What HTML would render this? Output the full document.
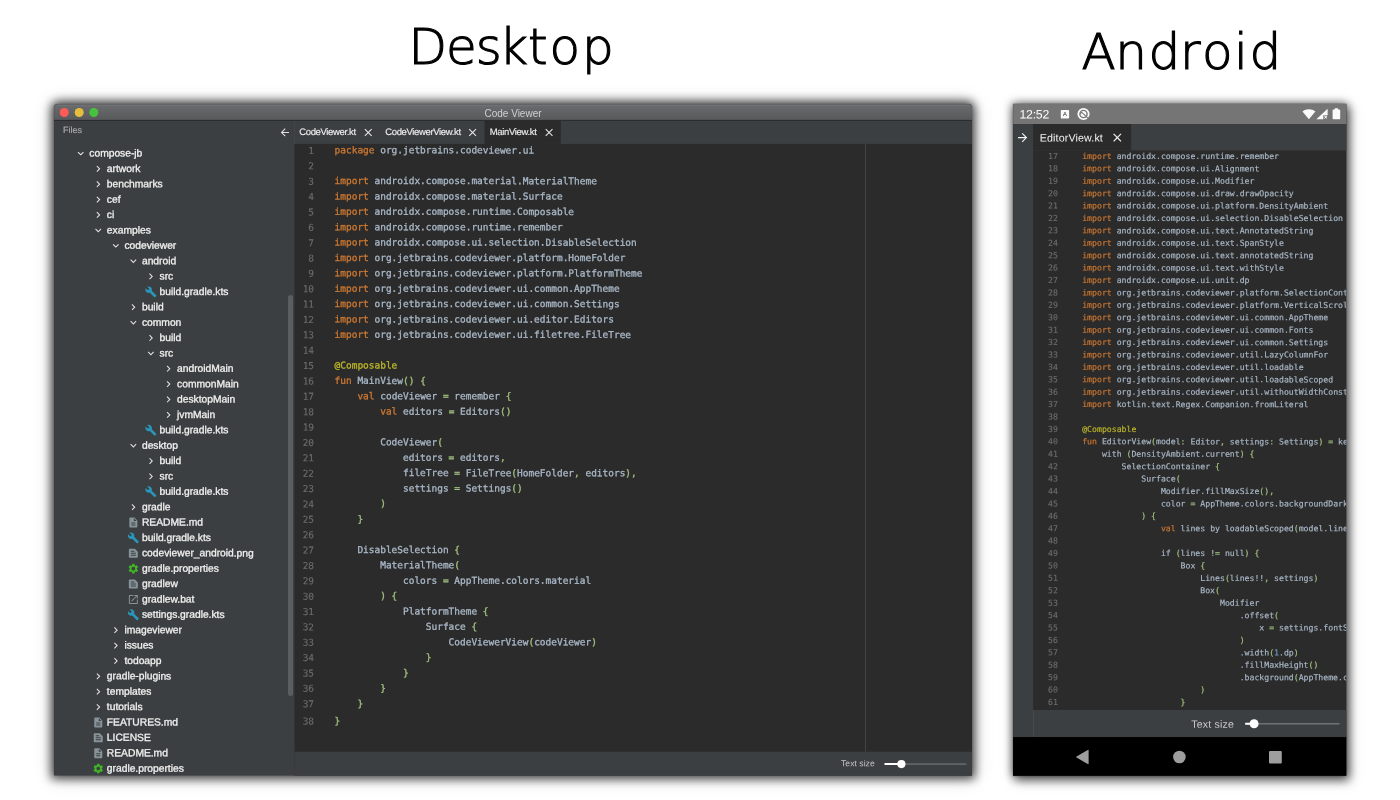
<!DOCTYPE html>
<html lang="en">
<head>
<meta charset="utf-8">
<title>Code Viewer - Desktop and Android</title>
<style>
html,body{margin:0;padding:0;background:#fff;}
html{width:1400px;height:800px;overflow:hidden;}
body{width:1400px;height:800px;position:relative;overflow:hidden;font-family:"Liberation Sans",sans-serif;}
div{position:absolute;white-space:nowrap;transform-origin:0 0;}
#titles{position:absolute;left:0;top:0;will-change:transform;}
#dshadow{left:54px;top:104px;width:918px;height:671px;border-radius:4px 4px 0 0;box-shadow:0 0.500px 10px 3px rgba(0,0,0,.68),0 1px 20px 1px rgba(0,0,0,.22),0 0 2px rgba(0,0,0,.3);background:#3c3f41;}
#ashadow{left:1013px;top:104px;width:333px;height:672px;box-shadow:0 0 9px 1px rgba(0,0,0,.5),3px 4px 10px 1px rgba(0,0,0,.5),0 0 2px rgba(0,0,0,.3);background:#2b2b2b;}
#ui{left:0;top:0;width:1400px;height:800px;overflow:hidden;filter:blur(0.4px);will-change:transform;}
#ui svg{position:absolute;left:0;top:0;}
#aclip{left:0;top:0;width:1347px;height:800px;overflow:hidden;clip-path:inset(0 0.700px 0 0);}
.ttl{height:17px;line-height:20.4px;text-align:center;font-size:10px;color:#cfd0d1;}
.fl{font-size:9px;line-height:14px;color:#abadae;-webkit-text-stroke:0.15px;}
.tab{font-size:9.5px;line-height:24px;height:24px;color:#ececec;letter-spacing:-0.35px;-webkit-text-stroke:0.15px;}
.ts{font-size:8.7px;line-height:14px;color:#c4c5c6;}
.ti{font-size:10.3px;line-height:15px;height:15px;color:#f0f0f0;letter-spacing:-0.02px;-webkit-text-stroke:0.3px #f0f0f0;}
.ln,.cl,.aln,.acl{font-family:"DejaVu Sans Mono","Liberation Mono",monospace;white-space:pre;-webkit-text-stroke:0.3px;}
.ln,.aln{-webkit-text-stroke:0.12px;color:#6c6c6c;text-align:right;}
.ln{font-size:9.5px;line-height:15px;height:15px;width:20px;}
.cl{font-size:9.48px;line-height:15px;height:15px;color:#a9b7c6;}
.aln{font-size:8.2px;line-height:12px;height:12px;width:17.3px;}
.acl{font-size:8.185px;line-height:12px;height:12px;color:#a9b7c6;-webkit-text-stroke:0.18px;}
.k{color:#cc7832}.p{color:#a1c17e}.v{color:#6897bb}.a{color:#bbb529}
.clk{font-size:12.3px;line-height:14px;color:#fafafa;letter-spacing:-0.25px;}
.abox{width:8.3px;height:8.6px;font-size:6px;line-height:8.4px;text-align:center;color:#6a6a6a;font-weight:bold;}
.atab{font-size:10.7px;line-height:14px;color:#f2f2f2;letter-spacing:0.12px;}
.ats{font-size:10.6px;line-height:14px;color:#c8c9ca;letter-spacing:0.2px;}
</style>
</head>
<body>
<svg id="titles" width="1400" height="100" viewBox="0 0 1400 100" font-family="DejaVu Sans, Liberation Sans, sans-serif" font-weight="200" font-size="50" fill="#000" stroke="#000" stroke-width="1.1">
<text x="408.400 445.900 475.800 499 528 549.400 582" y="64.300">Desktop</text>
<text x="1081.400 1115.300 1148.600 1180 1202 1233.900 1249.500" y="69">Android</text>
</svg>
<div id="dshadow"></div>
<div id="ashadow"></div>
<div id="ui">
<svg width="1400" height="800" viewBox="0 0 1400 800">
<defs><linearGradient id="tg" x1="0" y1="0" x2="0" y2="1"><stop offset="0" stop-color="#6a6c6e"/><stop offset="1" stop-color="#58595b"/></linearGradient></defs>
<path d="M54.2 775.4V107.7a3.500 3.500 0 0 1 3.500 -3.500H968.5a3.500 3.500 0 0 1 3.500 3.500V775.4z" fill="#3c3f41"/>
<path d="M54.2 120V107.7a3.500 3.500 0 0 1 3.500 -3.500H968.5a3.500 3.500 0 0 1 3.500 3.500V120z" fill="url(#tg)"/>
<rect x="56.2" y="104.8" width="913.8" height="0.9" fill="#747678"/>
<rect x="54.2" y="119.9" width="917.8" height="1.1" fill="#2a2c2d"/>
<circle cx="64.25" cy="112.5" r="4.5" fill="#fc5b57"/>
<circle cx="79.2" cy="112.5" r="4.5" fill="#e5bf3c"/>
<circle cx="93.8" cy="112.5" r="4.5" fill="#48c23c"/>
<rect x="294.5" y="121" width="677.5" height="654.4" fill="#2b2b2b"/>
<rect x="294.5" y="121" width="677.5" height="22.9" fill="#3c3f41"/>
<rect x="294" y="121" width="1" height="22.9" fill="#424547"/>
<rect x="484.5" y="121" width="76.3" height="22.9" fill="#2b2b2b"/>
<rect x="865" y="143.9" width="1" height="607.6" fill="#404446"/>
<rect x="294.5" y="751.75" width="677.5" height="23.65" fill="#3c3f41"/>
<rect x="288" y="295" width="5" height="401" rx="2.5" fill="#5b5e60"/>
<rect x="884.3" y="763.5" width="82" height="1.1" fill="#787b7d"/>
<rect x="884.3" y="763.1" width="17" height="2" rx="1" fill="#ffffff"/>
<circle cx="901.4" cy="764.1" r="4.1" fill="#ffffff"/>
<g transform="translate(278.75 126.25) scale(0.5125)" fill="#e0e0e0" fill-rule="evenodd"><path d="M20 11H7.830l5.590-5.590L12 4l-8 8 8 8 1.410-1.410L7.830 13H20v-2z"/></g>
<g transform="translate(361.8 126.05) scale(0.5375)" fill="#e6e6e6" fill-rule="evenodd"><path d="M19 6.410L17.590 5 12 10.590 6.410 5 5 6.410 10.590 12 5 17.590 6.410 19 12 13.410 17.590 19 19 17.590 13.410 12z"/></g>
<g transform="translate(466.15 126.05) scale(0.5375)" fill="#e6e6e6" fill-rule="evenodd"><path d="M19 6.410L17.590 5 12 10.590 6.410 5 5 6.410 10.590 12 5 17.590 6.410 19 12 13.410 17.590 19 19 17.590 13.410 12z"/></g>
<g transform="translate(542.65 126.05) scale(0.5375)" fill="#e6e6e6" fill-rule="evenodd"><path d="M19 6.410L17.590 5 12 10.590 6.410 5 5 6.410 10.590 12 5 17.590 6.410 19 12 13.410 17.590 19 19 17.590 13.410 12z"/></g>
<g transform="translate(74.45 147.2) scale(0.5208)" fill="#e4e4e4" fill-rule="evenodd"><path d="M7.41 8.59L12 13.17l4.59-4.58L18 10l-6 6-6-6 1.41-1.41z"/></g>
<g transform="translate(92 162.58) scale(0.5208)" fill="#e4e4e4" fill-rule="evenodd"><path d="M8.59 16.59L13.17 12 8.59 7.41 10 6l6 6-6 6-1.41-1.41z"/></g>
<g transform="translate(92 177.96) scale(0.5208)" fill="#e4e4e4" fill-rule="evenodd"><path d="M8.59 16.59L13.17 12 8.59 7.41 10 6l6 6-6 6-1.41-1.41z"/></g>
<g transform="translate(92 193.33) scale(0.5208)" fill="#e4e4e4" fill-rule="evenodd"><path d="M8.59 16.59L13.17 12 8.59 7.41 10 6l6 6-6 6-1.41-1.41z"/></g>
<g transform="translate(92 208.71) scale(0.5208)" fill="#e4e4e4" fill-rule="evenodd"><path d="M8.59 16.59L13.17 12 8.59 7.41 10 6l6 6-6 6-1.41-1.41z"/></g>
<g transform="translate(92 224.09) scale(0.5208)" fill="#e4e4e4" fill-rule="evenodd"><path d="M7.41 8.59L12 13.17l4.59-4.58L18 10l-6 6-6-6 1.41-1.41z"/></g>
<g transform="translate(109.55 239.47) scale(0.5208)" fill="#e4e4e4" fill-rule="evenodd"><path d="M7.41 8.59L12 13.17l4.59-4.58L18 10l-6 6-6-6 1.41-1.41z"/></g>
<g transform="translate(127.1 254.85) scale(0.5208)" fill="#e4e4e4" fill-rule="evenodd"><path d="M7.41 8.59L12 13.17l4.59-4.58L18 10l-6 6-6-6 1.41-1.41z"/></g>
<g transform="translate(144.65 270.22) scale(0.5208)" fill="#e4e4e4" fill-rule="evenodd"><path d="M8.59 16.59L13.17 12 8.59 7.41 10 6l6 6-6 6-1.41-1.41z"/></g>
<g transform="translate(144.9 285.85) scale(0.5000)" fill="#2a97ba" fill-rule="evenodd"><path d="M22.7 19l-9.1-9.1c.9-2.3.4-5-1.5-6.9-2-2-5-2.4-7.4-1.3L9 6 6 9 1.6 4.700C.4 7.100.9 10.100 2.900 12.100c1.900 1.900 4.600 2.400 6.900 1.500l9.100 9.100c.4.400 1 .400 1.400 0l2.300-2.300c.5-.4.5-1.100.1-1.400z"/></g>
<g transform="translate(127.1 300.98) scale(0.5208)" fill="#e4e4e4" fill-rule="evenodd"><path d="M8.59 16.59L13.17 12 8.59 7.41 10 6l6 6-6 6-1.41-1.41z"/></g>
<g transform="translate(127.1 316.36) scale(0.5208)" fill="#e4e4e4" fill-rule="evenodd"><path d="M7.41 8.59L12 13.17l4.59-4.58L18 10l-6 6-6-6 1.41-1.41z"/></g>
<g transform="translate(144.65 331.74) scale(0.5208)" fill="#e4e4e4" fill-rule="evenodd"><path d="M8.59 16.59L13.17 12 8.59 7.41 10 6l6 6-6 6-1.41-1.41z"/></g>
<g transform="translate(144.65 347.11) scale(0.5208)" fill="#e4e4e4" fill-rule="evenodd"><path d="M7.41 8.59L12 13.17l4.59-4.58L18 10l-6 6-6-6 1.41-1.41z"/></g>
<g transform="translate(162.2 362.49) scale(0.5208)" fill="#e4e4e4" fill-rule="evenodd"><path d="M8.59 16.59L13.17 12 8.59 7.41 10 6l6 6-6 6-1.41-1.41z"/></g>
<g transform="translate(162.2 377.87) scale(0.5208)" fill="#e4e4e4" fill-rule="evenodd"><path d="M8.59 16.59L13.17 12 8.59 7.41 10 6l6 6-6 6-1.41-1.41z"/></g>
<g transform="translate(162.2 393.25) scale(0.5208)" fill="#e4e4e4" fill-rule="evenodd"><path d="M8.59 16.59L13.17 12 8.59 7.41 10 6l6 6-6 6-1.41-1.41z"/></g>
<g transform="translate(162.2 408.63) scale(0.5208)" fill="#e4e4e4" fill-rule="evenodd"><path d="M8.59 16.59L13.17 12 8.59 7.41 10 6l6 6-6 6-1.41-1.41z"/></g>
<g transform="translate(144.9 424.25) scale(0.5000)" fill="#2a97ba" fill-rule="evenodd"><path d="M22.7 19l-9.1-9.1c.9-2.3.4-5-1.5-6.9-2-2-5-2.4-7.4-1.3L9 6 6 9 1.6 4.700C.4 7.100.9 10.100 2.900 12.100c1.900 1.900 4.600 2.400 6.900 1.500l9.100 9.100c.4.400 1 .400 1.400 0l2.300-2.300c.5-.4.5-1.100.1-1.400z"/></g>
<g transform="translate(127.1 439.38) scale(0.5208)" fill="#e4e4e4" fill-rule="evenodd"><path d="M7.41 8.59L12 13.17l4.59-4.58L18 10l-6 6-6-6 1.41-1.41z"/></g>
<g transform="translate(144.65 454.76) scale(0.5208)" fill="#e4e4e4" fill-rule="evenodd"><path d="M8.59 16.59L13.17 12 8.59 7.41 10 6l6 6-6 6-1.41-1.41z"/></g>
<g transform="translate(144.65 470.14) scale(0.5208)" fill="#e4e4e4" fill-rule="evenodd"><path d="M8.59 16.59L13.17 12 8.59 7.41 10 6l6 6-6 6-1.41-1.41z"/></g>
<g transform="translate(144.9 485.77) scale(0.5000)" fill="#2a97ba" fill-rule="evenodd"><path d="M22.7 19l-9.1-9.1c.9-2.3.4-5-1.5-6.9-2-2-5-2.4-7.4-1.3L9 6 6 9 1.6 4.700C.4 7.100.9 10.100 2.900 12.100c1.900 1.900 4.600 2.400 6.900 1.500l9.100 9.100c.4.400 1 .400 1.400 0l2.300-2.300c.5-.4.5-1.100.1-1.400z"/></g>
<g transform="translate(127.1 500.89) scale(0.5208)" fill="#e4e4e4" fill-rule="evenodd"><path d="M8.59 16.59L13.17 12 8.59 7.41 10 6l6 6-6 6-1.41-1.41z"/></g>
<g transform="translate(127.35 516.52) scale(0.5000)" fill="#87939a" fill-rule="evenodd"><path d="M14 2H6c-1.1 0-1.99.9-1.99 2L4 20c0 1.1.89 2 1.99 2H18c1.1 0 2-.9 2-2V8l-6-6zm2 16H8v-2h8v2zm0-4H8v-2h8v2zm-3-5V3.5L18.5 9H13z"/></g>
<g transform="translate(127.35 531.9) scale(0.5000)" fill="#2a97ba" fill-rule="evenodd"><path d="M22.7 19l-9.1-9.1c.9-2.3.4-5-1.5-6.9-2-2-5-2.4-7.4-1.3L9 6 6 9 1.6 4.700C.4 7.100.9 10.100 2.900 12.100c1.900 1.900 4.600 2.400 6.900 1.500l9.100 9.100c.4.400 1 .400 1.400 0l2.300-2.300c.5-.4.5-1.100.1-1.400z"/></g>
<g transform="translate(127.35 547.28) scale(0.5000)" fill="#87939a" fill-rule="evenodd"><path d="M20.41 8.41l-4.83-4.83c-.37-.37-.88-.58-1.41-.58H5c-1.1 0-2 .9-2 2v14c0 1.1.9 2 2 2h14c1.1 0 2-.9 2-2V9.83c0-.53-.21-1.04-.59-1.42zM7 7h7v2H7V7zm10 10H7v-2h10v2zm0-4H7v-2h10v2z"/></g>
<g transform="translate(127.35 562.66) scale(0.5000)" fill="#40b525" fill-rule="evenodd"><path d="M19.14 12.94c.04-.3.06-.61.06-.94 0-.32-.02-.64-.07-.94l2.030-1.580c.18-.14.23-.41.12-.61l-1.920-3.320c-.12-.22-.37-.29-.59-.22l-2.390.96c-.5-.38-1.030-.7-1.620-.94l-.36-2.540c-.04-.24-.24-.41-.48-.41h-3.840c-.24 0-.43.17-.47.41l-.36 2.540c-.59.24-1.130.57-1.620.94l-2.390-.96c-.22-.08-.47 0-.59.22L2.740 8.870c-.12.21-.08.47.12.61l2.030 1.580c-.05.3-.09.63-.09.94s.02.64.07.94l-2.030 1.580c-.18.14-.23.41-.12.61l1.920 3.320c.12.22.37.29.59.22l2.390-.96c.5.38 1.030.7 1.620.94l.36 2.540c.05.24.24.41.48.41h3.840c.24 0 .44-.17.47-.41l.36-2.540c.59-.24 1.130-.56 1.620-.94l2.390.96c.22.08.47 0 .59-.22l1.920-3.320c.12-.22.07-.47-.12-.61l-2.010-1.580zM12 15.600c-1.980 0-3.600-1.620-3.600-3.600s1.620-3.600 3.600-3.600 3.600 1.620 3.600 3.600-1.620 3.600-3.600 3.600z"/></g>
<g transform="translate(127.35 578.03) scale(0.5000)" fill="#87939a" fill-rule="evenodd"><path d="M20.41 8.41l-4.83-4.83c-.37-.37-.88-.58-1.41-.58H5c-1.1 0-2 .9-2 2v14c0 1.1.9 2 2 2h14c1.1 0 2-.9 2-2V9.83c0-.53-.21-1.04-.59-1.42zM7 7h7v2H7V7zm10 10H7v-2h10v2zm0-4H7v-2h10v2z"/></g>
<g transform="translate(127.35 593.41) scale(0.5000)" fill="#87939a" fill-rule="evenodd"><path d="M19 19H5V5h7V3H5c-1.110 0-2 .9-2 2v14c0 1.100.89 2 2 2h14c1.100 0 2-.9 2-2v-7h-2v7zM14 3v2h3.590l-9.830 9.830 1.410 1.410L19 6.410V10h2V3h-7z"/></g>
<g transform="translate(127.35 608.79) scale(0.5000)" fill="#2a97ba" fill-rule="evenodd"><path d="M22.7 19l-9.1-9.1c.9-2.3.4-5-1.5-6.9-2-2-5-2.4-7.4-1.3L9 6 6 9 1.6 4.700C.4 7.100.9 10.100 2.900 12.100c1.900 1.900 4.600 2.400 6.900 1.500l9.100 9.100c.4.400 1 .400 1.400 0l2.300-2.300c.5-.4.5-1.100.1-1.400z"/></g>
<g transform="translate(109.55 623.92) scale(0.5208)" fill="#e4e4e4" fill-rule="evenodd"><path d="M8.59 16.59L13.17 12 8.59 7.41 10 6l6 6-6 6-1.41-1.41z"/></g>
<g transform="translate(109.55 639.3) scale(0.5208)" fill="#e4e4e4" fill-rule="evenodd"><path d="M8.59 16.59L13.17 12 8.59 7.41 10 6l6 6-6 6-1.41-1.41z"/></g>
<g transform="translate(109.55 654.67) scale(0.5208)" fill="#e4e4e4" fill-rule="evenodd"><path d="M8.59 16.59L13.17 12 8.59 7.41 10 6l6 6-6 6-1.41-1.41z"/></g>
<g transform="translate(92 670.05) scale(0.5208)" fill="#e4e4e4" fill-rule="evenodd"><path d="M8.59 16.59L13.17 12 8.59 7.41 10 6l6 6-6 6-1.41-1.41z"/></g>
<g transform="translate(92 685.43) scale(0.5208)" fill="#e4e4e4" fill-rule="evenodd"><path d="M8.59 16.59L13.17 12 8.59 7.41 10 6l6 6-6 6-1.41-1.41z"/></g>
<g transform="translate(92 700.81) scale(0.5208)" fill="#e4e4e4" fill-rule="evenodd"><path d="M8.59 16.59L13.17 12 8.59 7.41 10 6l6 6-6 6-1.41-1.41z"/></g>
<g transform="translate(92.25 716.44) scale(0.5000)" fill="#87939a" fill-rule="evenodd"><path d="M14 2H6c-1.1 0-1.99.9-1.99 2L4 20c0 1.1.89 2 1.99 2H18c1.1 0 2-.9 2-2V8l-6-6zm2 16H8v-2h8v2zm0-4H8v-2h8v2zm-3-5V3.5L18.5 9H13z"/></g>
<g transform="translate(92.25 731.81) scale(0.5000)" fill="#87939a" fill-rule="evenodd"><path d="M20.41 8.41l-4.83-4.83c-.37-.37-.88-.58-1.41-.58H5c-1.1 0-2 .9-2 2v14c0 1.1.9 2 2 2h14c1.1 0 2-.9 2-2V9.83c0-.53-.21-1.04-.59-1.42zM7 7h7v2H7V7zm10 10H7v-2h10v2zm0-4H7v-2h10v2z"/></g>
<g transform="translate(92.25 747.19) scale(0.5000)" fill="#87939a" fill-rule="evenodd"><path d="M14 2H6c-1.1 0-1.99.9-1.99 2L4 20c0 1.1.89 2 1.99 2H18c1.1 0 2-.9 2-2V8l-6-6zm2 16H8v-2h8v2zm0-4H8v-2h8v2zm-3-5V3.5L18.5 9H13z"/></g>
<g transform="translate(92.25 762.57) scale(0.5000)" fill="#40b525" fill-rule="evenodd"><path d="M19.14 12.94c.04-.3.06-.61.06-.94 0-.32-.02-.64-.07-.94l2.030-1.580c.18-.14.23-.41.12-.61l-1.920-3.320c-.12-.22-.37-.29-.59-.22l-2.390.96c-.5-.38-1.030-.7-1.620-.94l-.36-2.540c-.04-.24-.24-.41-.48-.41h-3.840c-.24 0-.43.17-.47.41l-.36 2.540c-.59.24-1.130.57-1.620.94l-2.390-.96c-.22-.08-.47 0-.59.22L2.740 8.870c-.12.21-.08.47.12.61l2.030 1.580c-.05.3-.09.63-.09.94s.02.64.07.94l-2.030 1.580c-.18.14-.23.41-.12.61l1.920 3.320c.12.22.37.29.59.22l2.390-.96c.5.38 1.030.7 1.620.94l.36 2.540c.05.24.24.41.48.41h3.840c.24 0 .44-.17.47-.41l.36-2.540c.59-.24 1.130-.56 1.620-.94l2.390.96c.22.08.47 0 .59-.22l1.920-3.320c.12-.22.07-.47-.12-.61l-2.010-1.580zM12 15.600c-1.980 0-3.600-1.620-3.600-3.600s1.620-3.600 3.600-3.600 3.600 1.620 3.600 3.600-1.620 3.600-3.600 3.600z"/></g>
<rect x="1013.1" y="103.9" width="333.2" height="671.8" fill="#2b2b2b"/>
<rect x="1013.1" y="103.9" width="333.2" height="20.2" fill="#757575"/>
<rect x="1013.1" y="124.1" width="20" height="613" fill="#3c3f41"/>
<rect x="1033.1" y="124.1" width="313.2" height="26.3" fill="#3c3f41"/>
<rect x="1033.1" y="124.1" width="98" height="26.3" fill="#2b2b2b"/>
<rect x="1033.1" y="710" width="313.2" height="27.2" fill="#3c3f41"/>
<rect x="1033.1" y="710" width="0.8" height="27.2" fill="#4a4e50"/>
<rect x="1013.1" y="737.1" width="333.2" height="38.6" fill="#000000"/>
<rect x="1060.8" y="109.9" width="8.3" height="8.6" rx="0.8" fill="#fafafa"/>
<g transform="translate(1083.500 114)"><circle r="5.200" fill="none" stroke="#fafafa" stroke-width="1.800"/><circle r="2.900" fill="#fafafa"/><path d="M-3.100 -0.500L-1.700 -1.600L5 4.600" fill="none" stroke="#757575" stroke-width="1.100"/></g>
<path transform="translate(1302.300 109.200) scale(0.5077 0.5)" fill="#fafafa" d="M13 20L0.300 4.500C4 1.600 8.300 0 13 0s9 1.600 12.700 4.500L13 20z"/>
<g transform="translate(1316.400 108.800) scale(0.5091 0.52)" fill="#fafafa"><path d="M22 0L0 20h13.500v-7.500H22V0z"/><path d="M15.200 14.200l1.100-1.100 1.900 1.900 1.900-1.900 1.100 1.100-1.900 1.900 1.900 1.900-1.100 1.100-1.900-1.900-1.900 1.900-1.100-1.100 1.900-1.900z"/></g>
<path transform="translate(1332.600 108.300) scale(0.5429 0.545)" fill="#fafafa" d="M4 0h6v2h2.500c.8 0 1.500.7 1.500 1.500v15c0 .8-.7 1.500-1.500 1.500h-11C.7 20 0 19.300 0 18.500v-15C0 2.700.7 2 1.500 2H4V0z"/>
<g transform="translate(1015.7 130.7) scale(0.5750)" fill="#f2f2f2" fill-rule="evenodd"><path d="M12 4l-1.410 1.410L16.170 11H4v2h12.170l-5.580 5.590L12 20l8-8z"/></g>
<g transform="translate(1110.25 130.55) scale(0.5875)" fill="#f2f2f2" fill-rule="evenodd"><path d="M19 6.410L17.590 5 12 10.590 6.410 5 5 6.410 10.590 12 5 17.590 6.410 19 12 13.410 17.590 19 19 17.590 13.410 12z"/></g>
<rect x="1245" y="723.2" width="94.5" height="1.2" fill="#7c7f82"/>
<rect x="1245" y="722.8" width="9" height="2" rx="1" fill="#ffffff"/>
<circle cx="1254.1" cy="723.8" r="4.5" fill="#ffffff"/>
<path transform="translate(1075.800 749.800) scale(0.9714 0.96)" fill="#9e9e9e" d="M13.200 0.600v13.800a.6.600 0 0 1-.9.500L0.800 8a.6.600 0 0 1 0-1L12.300.1a.6.600 0 0 1 .9.500z"/>
<circle cx="1179.4" cy="757" r="6.3" fill="#9e9e9e"/>
<rect x="1269" y="750.9" width="12.8" height="12.6" rx="1" fill="#9e9e9e"/>
</svg>
<div class="ttl" style="left:54px;top:104px;width:918px;">Code Viewer</div>
<div class="fl" style="left:63px;top:123px;transform:matrix(1,0.0005,0,1,0,0);">Files</div>
<div class="tab" style="left:299px;top:120px;transform:matrix(1,0.0005,0,1,0.2,0);">CodeViewer.kt</div>
<div class="tab" style="left:385px;top:120px;transform:matrix(1,0.0005,0,1,0.2,0);">CodeViewerView.kt</div>
<div class="tab" style="left:489px;top:120px;transform:matrix(1,0.0005,0,1,0.8,0);">MainView.kt</div>
<div class="ts" style="left:841px;top:756px;transform:matrix(1,0.0005,0,1,0,0.2);">Text size</div>
<div class="ti" style="left:89px;top:145px;transform:matrix(1,0.0005,0,1,0.3,0.5);">compose-jb</div>
<div class="ti" style="left:106px;top:160px;transform:matrix(1,0.0005,0,1,0.85,0.88);">artwork</div>
<div class="ti" style="left:106px;top:176px;transform:matrix(1,0.0005,0,1,0.85,0.26);">benchmarks</div>
<div class="ti" style="left:106px;top:191px;transform:matrix(1,0.0005,0,1,0.85,0.63);">cef</div>
<div class="ti" style="left:106px;top:207px;transform:matrix(1,0.0005,0,1,0.85,0.01);">ci</div>
<div class="ti" style="left:106px;top:222px;transform:matrix(1,0.0005,0,1,0.85,0.39);">examples</div>
<div class="ti" style="left:124px;top:237px;transform:matrix(1,0.0005,0,1,0.4,0.77);">codeviewer</div>
<div class="ti" style="left:141px;top:253px;transform:matrix(1,0.0005,0,1,0.95,0.15);">android</div>
<div class="ti" style="left:159px;top:268px;transform:matrix(1,0.0005,0,1,0.5,0.52);">src</div>
<div class="ti" style="left:159px;top:283px;transform:matrix(1,0.0005,0,1,0.5,0.9);">build.gradle.kts</div>
<div class="ti" style="left:141px;top:299px;transform:matrix(1,0.0005,0,1,0.95,0.28);">build</div>
<div class="ti" style="left:141px;top:314px;transform:matrix(1,0.0005,0,1,0.95,0.66);">common</div>
<div class="ti" style="left:159px;top:330px;transform:matrix(1,0.0005,0,1,0.5,0.04);">build</div>
<div class="ti" style="left:159px;top:345px;transform:matrix(1,0.0005,0,1,0.5,0.41);">src</div>
<div class="ti" style="left:177px;top:360px;transform:matrix(1,0.0005,0,1,0.05,0.79);">androidMain</div>
<div class="ti" style="left:177px;top:376px;transform:matrix(1,0.0005,0,1,0.05,0.17);">commonMain</div>
<div class="ti" style="left:177px;top:391px;transform:matrix(1,0.0005,0,1,0.05,0.55);">desktopMain</div>
<div class="ti" style="left:177px;top:406px;transform:matrix(1,0.0005,0,1,0.05,0.93);">jvmMain</div>
<div class="ti" style="left:159px;top:422px;transform:matrix(1,0.0005,0,1,0.5,0.3);">build.gradle.kts</div>
<div class="ti" style="left:141px;top:437px;transform:matrix(1,0.0005,0,1,0.95,0.68);">desktop</div>
<div class="ti" style="left:159px;top:453px;transform:matrix(1,0.0005,0,1,0.5,0.06);">build</div>
<div class="ti" style="left:159px;top:468px;transform:matrix(1,0.0005,0,1,0.5,0.44);">src</div>
<div class="ti" style="left:159px;top:483px;transform:matrix(1,0.0005,0,1,0.5,0.82);">build.gradle.kts</div>
<div class="ti" style="left:141px;top:499px;transform:matrix(1,0.0005,0,1,0.95,0.19);">gradle</div>
<div class="ti" style="left:141px;top:514px;transform:matrix(1,0.0005,0,1,0.95,0.57);">README.md</div>
<div class="ti" style="left:141px;top:529px;transform:matrix(1,0.0005,0,1,0.95,0.95);">build.gradle.kts</div>
<div class="ti" style="left:141px;top:545px;transform:matrix(1,0.0005,0,1,0.95,0.33);">codeviewer_android.png</div>
<div class="ti" style="left:141px;top:560px;transform:matrix(1,0.0005,0,1,0.95,0.71);">gradle.properties</div>
<div class="ti" style="left:141px;top:576px;transform:matrix(1,0.0005,0,1,0.95,0.08);">gradlew</div>
<div class="ti" style="left:141px;top:591px;transform:matrix(1,0.0005,0,1,0.95,0.46);">gradlew.bat</div>
<div class="ti" style="left:141px;top:606px;transform:matrix(1,0.0005,0,1,0.95,0.84);">settings.gradle.kts</div>
<div class="ti" style="left:124px;top:622px;transform:matrix(1,0.0005,0,1,0.4,0.22);">imageviewer</div>
<div class="ti" style="left:124px;top:637px;transform:matrix(1,0.0005,0,1,0.4,0.6);">issues</div>
<div class="ti" style="left:124px;top:652px;transform:matrix(1,0.0005,0,1,0.4,0.97);">todoapp</div>
<div class="ti" style="left:106px;top:668px;transform:matrix(1,0.0005,0,1,0.85,0.35);">gradle-plugins</div>
<div class="ti" style="left:106px;top:683px;transform:matrix(1,0.0005,0,1,0.85,0.73);">templates</div>
<div class="ti" style="left:106px;top:699px;transform:matrix(1,0.0005,0,1,0.85,0.11);">tutorials</div>
<div class="ti" style="left:106px;top:714px;transform:matrix(1,0.0005,0,1,0.85,0.49);">FEATURES.md</div>
<div class="ti" style="left:106px;top:729px;transform:matrix(1,0.0005,0,1,0.85,0.86);">LICENSE</div>
<div class="ti" style="left:106px;top:745px;transform:matrix(1,0.0005,0,1,0.85,0.24);">README.md</div>
<div class="ti" style="left:106px;top:760px;transform:matrix(1,0.0005,0,1,0.85,0.62);">gradle.properties</div>
<div class="ln" style="left:294px;top:142px;transform:matrix(1,0.0005,0,1,0.1,0.9);">1</div>
<div class="cl" style="left:334px;top:142px;transform:matrix(1,0.0005,0,1,0.6,0.3);"><span class="k">package </span>org.jetbrains.codeviewer.ui</div>
<div class="ln" style="left:294px;top:158px;transform:matrix(1,0.0005,0,1,0.1,0.27);">2</div>
<div class="ln" style="left:294px;top:173px;transform:matrix(1,0.0005,0,1,0.1,0.64);">3</div>
<div class="cl" style="left:334px;top:173px;transform:matrix(1,0.0005,0,1,0.6,0.04);"><span class="k">import </span>androidx.compose.material.MaterialTheme</div>
<div class="ln" style="left:294px;top:189px;transform:matrix(1,0.0005,0,1,0.1,0.01);">4</div>
<div class="cl" style="left:334px;top:188px;transform:matrix(1,0.0005,0,1,0.6,0.41);"><span class="k">import </span>androidx.compose.material.Surface</div>
<div class="ln" style="left:294px;top:204px;transform:matrix(1,0.0005,0,1,0.1,0.38);">5</div>
<div class="cl" style="left:334px;top:203px;transform:matrix(1,0.0005,0,1,0.6,0.78);"><span class="k">import </span>androidx.compose.runtime.Composable</div>
<div class="ln" style="left:294px;top:219px;transform:matrix(1,0.0005,0,1,0.1,0.75);">6</div>
<div class="cl" style="left:334px;top:219px;transform:matrix(1,0.0005,0,1,0.6,0.15);"><span class="k">import </span>androidx.compose.runtime.remember</div>
<div class="ln" style="left:294px;top:235px;transform:matrix(1,0.0005,0,1,0.1,0.12);">7</div>
<div class="cl" style="left:334px;top:234px;transform:matrix(1,0.0005,0,1,0.6,0.52);"><span class="k">import </span>androidx.compose.ui.selection.DisableSelection</div>
<div class="ln" style="left:294px;top:250px;transform:matrix(1,0.0005,0,1,0.1,0.49);">8</div>
<div class="cl" style="left:334px;top:249px;transform:matrix(1,0.0005,0,1,0.6,0.89);"><span class="k">import </span>org.jetbrains.codeviewer.platform.HomeFolder</div>
<div class="ln" style="left:294px;top:265px;transform:matrix(1,0.0005,0,1,0.1,0.86);">9</div>
<div class="cl" style="left:334px;top:265px;transform:matrix(1,0.0005,0,1,0.6,0.26);"><span class="k">import </span>org.jetbrains.codeviewer.platform.PlatformTheme</div>
<div class="ln" style="left:294px;top:281px;transform:matrix(1,0.0005,0,1,0.1,0.23);">10</div>
<div class="cl" style="left:334px;top:280px;transform:matrix(1,0.0005,0,1,0.6,0.63);"><span class="k">import </span>org.jetbrains.codeviewer.ui.common.AppTheme</div>
<div class="ln" style="left:294px;top:296px;transform:matrix(1,0.0005,0,1,0.1,0.6);">11</div>
<div class="cl" style="left:334px;top:295px;transform:matrix(1,0.0005,0,1,0.6,1);"><span class="k">import </span>org.jetbrains.codeviewer.ui.common.Settings</div>
<div class="ln" style="left:294px;top:311px;transform:matrix(1,0.0005,0,1,0.1,0.97);">12</div>
<div class="cl" style="left:334px;top:311px;transform:matrix(1,0.0005,0,1,0.6,0.37);"><span class="k">import </span>org.jetbrains.codeviewer.ui.editor.Editors</div>
<div class="ln" style="left:294px;top:327px;transform:matrix(1,0.0005,0,1,0.1,0.34);">13</div>
<div class="cl" style="left:334px;top:326px;transform:matrix(1,0.0005,0,1,0.6,0.74);"><span class="k">import </span>org.jetbrains.codeviewer.ui.filetree.FileTree</div>
<div class="ln" style="left:294px;top:342px;transform:matrix(1,0.0005,0,1,0.1,0.71);">14</div>
<div class="ln" style="left:294px;top:358px;transform:matrix(1,0.0005,0,1,0.1,0.08);">15</div>
<div class="cl" style="left:334px;top:357px;transform:matrix(1,0.0005,0,1,0.6,0.48);"><span class="a">@Composable</span></div>
<div class="ln" style="left:294px;top:373px;transform:matrix(1,0.0005,0,1,0.1,0.45);">16</div>
<div class="cl" style="left:334px;top:372px;transform:matrix(1,0.0005,0,1,0.6,0.85);"><span class="k">fun </span>MainView<span class="p">()</span> <span class="p">{</span></div>
<div class="ln" style="left:294px;top:388px;transform:matrix(1,0.0005,0,1,0.1,0.82);">17</div>
<div class="cl" style="left:334px;top:388px;transform:matrix(1,0.0005,0,1,0.6,0.22);">    <span class="k">val </span>codeViewer <span class="p">=</span> remember <span class="p">{</span></div>
<div class="ln" style="left:294px;top:404px;transform:matrix(1,0.0005,0,1,0.1,0.19);">18</div>
<div class="cl" style="left:334px;top:403px;transform:matrix(1,0.0005,0,1,0.6,0.59);">        <span class="k">val </span>editors <span class="p">=</span> Editors<span class="p">()</span></div>
<div class="ln" style="left:294px;top:419px;transform:matrix(1,0.0005,0,1,0.1,0.56);">19</div>
<div class="ln" style="left:294px;top:434px;transform:matrix(1,0.0005,0,1,0.1,0.93);">20</div>
<div class="cl" style="left:334px;top:434px;transform:matrix(1,0.0005,0,1,0.6,0.33);">        CodeViewer<span class="p">(</span></div>
<div class="ln" style="left:294px;top:450px;transform:matrix(1,0.0005,0,1,0.1,0.3);">21</div>
<div class="cl" style="left:334px;top:449px;transform:matrix(1,0.0005,0,1,0.6,0.7);">            editors <span class="p">=</span> editors<span class="p">,</span></div>
<div class="ln" style="left:294px;top:465px;transform:matrix(1,0.0005,0,1,0.1,0.67);">22</div>
<div class="cl" style="left:334px;top:465px;transform:matrix(1,0.0005,0,1,0.6,0.07);">            fileTree <span class="p">=</span> FileTree<span class="p">(</span>HomeFolder<span class="p">,</span> editors<span class="p">),</span></div>
<div class="ln" style="left:294px;top:481px;transform:matrix(1,0.0005,0,1,0.1,0.04);">23</div>
<div class="cl" style="left:334px;top:480px;transform:matrix(1,0.0005,0,1,0.6,0.44);">            settings <span class="p">=</span> Settings<span class="p">()</span></div>
<div class="ln" style="left:294px;top:496px;transform:matrix(1,0.0005,0,1,0.1,0.41);">24</div>
<div class="cl" style="left:334px;top:495px;transform:matrix(1,0.0005,0,1,0.6,0.81);">        <span class="p">)</span></div>
<div class="ln" style="left:294px;top:511px;transform:matrix(1,0.0005,0,1,0.1,0.78);">25</div>
<div class="cl" style="left:334px;top:511px;transform:matrix(1,0.0005,0,1,0.6,0.18);">    <span class="p">}</span></div>
<div class="ln" style="left:294px;top:527px;transform:matrix(1,0.0005,0,1,0.1,0.15);">26</div>
<div class="ln" style="left:294px;top:542px;transform:matrix(1,0.0005,0,1,0.1,0.52);">27</div>
<div class="cl" style="left:334px;top:541px;transform:matrix(1,0.0005,0,1,0.6,0.92);">    DisableSelection <span class="p">{</span></div>
<div class="ln" style="left:294px;top:557px;transform:matrix(1,0.0005,0,1,0.1,0.89);">28</div>
<div class="cl" style="left:334px;top:557px;transform:matrix(1,0.0005,0,1,0.6,0.29);">        MaterialTheme<span class="p">(</span></div>
<div class="ln" style="left:294px;top:573px;transform:matrix(1,0.0005,0,1,0.1,0.26);">29</div>
<div class="cl" style="left:334px;top:572px;transform:matrix(1,0.0005,0,1,0.6,0.66);">            colors <span class="p">=</span> AppTheme.colors.material</div>
<div class="ln" style="left:294px;top:588px;transform:matrix(1,0.0005,0,1,0.1,0.63);">30</div>
<div class="cl" style="left:334px;top:588px;transform:matrix(1,0.0005,0,1,0.6,0.03);">        <span class="p">)</span> <span class="p">{</span></div>
<div class="ln" style="left:294px;top:603px;transform:matrix(1,0.0005,0,1,0.1,1);">31</div>
<div class="cl" style="left:334px;top:603px;transform:matrix(1,0.0005,0,1,0.6,0.4);">            PlatformTheme <span class="p">{</span></div>
<div class="ln" style="left:294px;top:619px;transform:matrix(1,0.0005,0,1,0.1,0.37);">32</div>
<div class="cl" style="left:334px;top:618px;transform:matrix(1,0.0005,0,1,0.6,0.77);">                Surface <span class="p">{</span></div>
<div class="ln" style="left:294px;top:634px;transform:matrix(1,0.0005,0,1,0.1,0.74);">33</div>
<div class="cl" style="left:334px;top:634px;transform:matrix(1,0.0005,0,1,0.6,0.14);">                    CodeViewerView<span class="p">(</span>codeViewer<span class="p">)</span></div>
<div class="ln" style="left:294px;top:650px;transform:matrix(1,0.0005,0,1,0.1,0.11);">34</div>
<div class="cl" style="left:334px;top:649px;transform:matrix(1,0.0005,0,1,0.6,0.51);">                <span class="p">}</span></div>
<div class="ln" style="left:294px;top:665px;transform:matrix(1,0.0005,0,1,0.1,0.48);">35</div>
<div class="cl" style="left:334px;top:664px;transform:matrix(1,0.0005,0,1,0.6,0.88);">            <span class="p">}</span></div>
<div class="ln" style="left:294px;top:680px;transform:matrix(1,0.0005,0,1,0.1,0.85);">36</div>
<div class="cl" style="left:334px;top:680px;transform:matrix(1,0.0005,0,1,0.6,0.25);">        <span class="p">}</span></div>
<div class="ln" style="left:294px;top:696px;transform:matrix(1,0.0005,0,1,0.1,0.22);">37</div>
<div class="cl" style="left:334px;top:695px;transform:matrix(1,0.0005,0,1,0.6,0.62);">    <span class="p">}</span></div>
<div class="ln" style="left:294px;top:713px;transform:matrix(1,0.0005,0,1,0.1,0.59);">38</div>
<div class="cl" style="left:334px;top:712px;transform:matrix(1,0.0005,0,1,0.6,0.99);"><span class="p">}</span></div>
<div class="clk" style="left:1019px;top:107px;transform:matrix(1,0.0005,0,1,0.5,0.5);">12:52</div>
<div class="abox" style="left:1060px;top:109px;transform:matrix(1,0.0005,0,1,0.8,0.9);">A</div>
<div class="atab" style="left:1039px;top:130px;transform:matrix(1,0.0005,0,1,0.8,0.4);">EditorView.kt</div>
<div class="ats" style="left:1191px;top:716px;transform:matrix(1,0.0005,0,1,0.2,0.7);">Text size</div>
<div id="aclip">
<div class="aln" style="left:1040px;top:149px;transform:matrix(1,0.0005,0,1,0.6,0.9);">17</div>
<div class="acl" style="left:1082px;top:149px;transform:matrix(1,0.0005,0,1,0.2,0.9);"><span class="k">import </span>androidx.compose.runtime.remember</div>
<div class="aln" style="left:1040px;top:162px;transform:matrix(1,0.0005,0,1,0.6,0.31);">18</div>
<div class="acl" style="left:1082px;top:162px;transform:matrix(1,0.0005,0,1,0.2,0.31);"><span class="k">import </span>androidx.compose.ui.Alignment</div>
<div class="aln" style="left:1040px;top:174px;transform:matrix(1,0.0005,0,1,0.6,0.72);">19</div>
<div class="acl" style="left:1082px;top:174px;transform:matrix(1,0.0005,0,1,0.2,0.72);"><span class="k">import </span>androidx.compose.ui.Modifier</div>
<div class="aln" style="left:1040px;top:187px;transform:matrix(1,0.0005,0,1,0.6,0.13);">20</div>
<div class="acl" style="left:1082px;top:187px;transform:matrix(1,0.0005,0,1,0.2,0.13);"><span class="k">import </span>androidx.compose.ui.draw.drawOpacity</div>
<div class="aln" style="left:1040px;top:199px;transform:matrix(1,0.0005,0,1,0.6,0.54);">21</div>
<div class="acl" style="left:1082px;top:199px;transform:matrix(1,0.0005,0,1,0.2,0.54);"><span class="k">import </span>androidx.compose.ui.platform.DensityAmbient</div>
<div class="aln" style="left:1040px;top:211px;transform:matrix(1,0.0005,0,1,0.6,0.95);">22</div>
<div class="acl" style="left:1082px;top:211px;transform:matrix(1,0.0005,0,1,0.2,0.95);"><span class="k">import </span>androidx.compose.ui.selection.DisableSelection</div>
<div class="aln" style="left:1040px;top:224px;transform:matrix(1,0.0005,0,1,0.6,0.36);">23</div>
<div class="acl" style="left:1082px;top:224px;transform:matrix(1,0.0005,0,1,0.2,0.36);"><span class="k">import </span>androidx.compose.ui.text.AnnotatedString</div>
<div class="aln" style="left:1040px;top:236px;transform:matrix(1,0.0005,0,1,0.6,0.77);">24</div>
<div class="acl" style="left:1082px;top:236px;transform:matrix(1,0.0005,0,1,0.2,0.77);"><span class="k">import </span>androidx.compose.ui.text.SpanStyle</div>
<div class="aln" style="left:1040px;top:249px;transform:matrix(1,0.0005,0,1,0.6,0.18);">25</div>
<div class="acl" style="left:1082px;top:249px;transform:matrix(1,0.0005,0,1,0.2,0.18);"><span class="k">import </span>androidx.compose.ui.text.annotatedString</div>
<div class="aln" style="left:1040px;top:261px;transform:matrix(1,0.0005,0,1,0.6,0.59);">26</div>
<div class="acl" style="left:1082px;top:261px;transform:matrix(1,0.0005,0,1,0.2,0.59);"><span class="k">import </span>androidx.compose.ui.text.withStyle</div>
<div class="aln" style="left:1040px;top:274px;transform:matrix(1,0.0005,0,1,0.6,0);">27</div>
<div class="acl" style="left:1082px;top:274px;transform:matrix(1,0.0005,0,1,0.2,0);"><span class="k">import </span>androidx.compose.ui.unit.dp</div>
<div class="aln" style="left:1040px;top:286px;transform:matrix(1,0.0005,0,1,0.6,0.41);">28</div>
<div class="acl" style="left:1082px;top:286px;transform:matrix(1,0.0005,0,1,0.2,0.41);"><span class="k">import </span>org.jetbrains.codeviewer.platform.SelectionContainer</div>
<div class="aln" style="left:1040px;top:298px;transform:matrix(1,0.0005,0,1,0.6,0.82);">29</div>
<div class="acl" style="left:1082px;top:298px;transform:matrix(1,0.0005,0,1,0.2,0.82);"><span class="k">import </span>org.jetbrains.codeviewer.platform.VerticalScrollbar</div>
<div class="aln" style="left:1040px;top:311px;transform:matrix(1,0.0005,0,1,0.6,0.23);">30</div>
<div class="acl" style="left:1082px;top:311px;transform:matrix(1,0.0005,0,1,0.2,0.23);"><span class="k">import </span>org.jetbrains.codeviewer.ui.common.AppTheme</div>
<div class="aln" style="left:1040px;top:323px;transform:matrix(1,0.0005,0,1,0.6,0.64);">31</div>
<div class="acl" style="left:1082px;top:323px;transform:matrix(1,0.0005,0,1,0.2,0.64);"><span class="k">import </span>org.jetbrains.codeviewer.ui.common.Fonts</div>
<div class="aln" style="left:1040px;top:336px;transform:matrix(1,0.0005,0,1,0.6,0.05);">32</div>
<div class="acl" style="left:1082px;top:336px;transform:matrix(1,0.0005,0,1,0.2,0.05);"><span class="k">import </span>org.jetbrains.codeviewer.ui.common.Settings</div>
<div class="aln" style="left:1040px;top:348px;transform:matrix(1,0.0005,0,1,0.6,0.46);">33</div>
<div class="acl" style="left:1082px;top:348px;transform:matrix(1,0.0005,0,1,0.2,0.46);"><span class="k">import </span>org.jetbrains.codeviewer.util.LazyColumnFor</div>
<div class="aln" style="left:1040px;top:360px;transform:matrix(1,0.0005,0,1,0.6,0.87);">34</div>
<div class="acl" style="left:1082px;top:360px;transform:matrix(1,0.0005,0,1,0.2,0.87);"><span class="k">import </span>org.jetbrains.codeviewer.util.loadable</div>
<div class="aln" style="left:1040px;top:373px;transform:matrix(1,0.0005,0,1,0.6,0.28);">35</div>
<div class="acl" style="left:1082px;top:373px;transform:matrix(1,0.0005,0,1,0.2,0.28);"><span class="k">import </span>org.jetbrains.codeviewer.util.loadableScoped</div>
<div class="aln" style="left:1040px;top:385px;transform:matrix(1,0.0005,0,1,0.6,0.69);">36</div>
<div class="acl" style="left:1082px;top:385px;transform:matrix(1,0.0005,0,1,0.2,0.69);"><span class="k">import </span>org.jetbrains.codeviewer.util.withoutWidthConstraints</div>
<div class="aln" style="left:1040px;top:398px;transform:matrix(1,0.0005,0,1,0.6,0.1);">37</div>
<div class="acl" style="left:1082px;top:398px;transform:matrix(1,0.0005,0,1,0.2,0.1);"><span class="k">import </span>kotlin.text.Regex.Companion.fromLiteral</div>
<div class="aln" style="left:1040px;top:410px;transform:matrix(1,0.0005,0,1,0.6,0.51);">38</div>
<div class="aln" style="left:1040px;top:422px;transform:matrix(1,0.0005,0,1,0.6,0.92);">39</div>
<div class="acl" style="left:1082px;top:422px;transform:matrix(1,0.0005,0,1,0.2,0.92);"><span class="a">@Composable</span></div>
<div class="aln" style="left:1040px;top:435px;transform:matrix(1,0.0005,0,1,0.6,0.33);">40</div>
<div class="acl" style="left:1082px;top:435px;transform:matrix(1,0.0005,0,1,0.2,0.33);"><span class="k">fun </span>EditorView<span class="p">(</span>model<span class="p">:</span> Editor<span class="p">,</span> settings<span class="p">:</span> Settings<span class="p">)</span> <span class="p">=</span> key<span class="p">(</span>model<span class="p">)</span> <span class="p">{</span></div>
<div class="aln" style="left:1040px;top:447px;transform:matrix(1,0.0005,0,1,0.6,0.74);">41</div>
<div class="acl" style="left:1082px;top:447px;transform:matrix(1,0.0005,0,1,0.2,0.74);">    with <span class="p">(</span>DensityAmbient.current<span class="p">)</span> <span class="p">{</span></div>
<div class="aln" style="left:1040px;top:460px;transform:matrix(1,0.0005,0,1,0.6,0.15);">42</div>
<div class="acl" style="left:1082px;top:460px;transform:matrix(1,0.0005,0,1,0.2,0.15);">        SelectionContainer <span class="p">{</span></div>
<div class="aln" style="left:1040px;top:472px;transform:matrix(1,0.0005,0,1,0.6,0.56);">43</div>
<div class="acl" style="left:1082px;top:472px;transform:matrix(1,0.0005,0,1,0.2,0.56);">            Surface<span class="p">(</span></div>
<div class="aln" style="left:1040px;top:484px;transform:matrix(1,0.0005,0,1,0.6,0.97);">44</div>
<div class="acl" style="left:1082px;top:484px;transform:matrix(1,0.0005,0,1,0.2,0.97);">                Modifier.fillMaxSize<span class="p">(),</span></div>
<div class="aln" style="left:1040px;top:497px;transform:matrix(1,0.0005,0,1,0.6,0.38);">45</div>
<div class="acl" style="left:1082px;top:497px;transform:matrix(1,0.0005,0,1,0.2,0.38);">                color <span class="p">=</span> AppTheme.colors.backgroundDark<span class="p">,</span></div>
<div class="aln" style="left:1040px;top:509px;transform:matrix(1,0.0005,0,1,0.6,0.79);">46</div>
<div class="acl" style="left:1082px;top:509px;transform:matrix(1,0.0005,0,1,0.2,0.79);">            <span class="p">)</span> <span class="p">{</span></div>
<div class="aln" style="left:1040px;top:522px;transform:matrix(1,0.0005,0,1,0.6,0.2);">47</div>
<div class="acl" style="left:1082px;top:522px;transform:matrix(1,0.0005,0,1,0.2,0.2);">                <span class="k">val </span>lines by loadableScoped<span class="p">(</span>model.lines<span class="p">)</span></div>
<div class="aln" style="left:1040px;top:534px;transform:matrix(1,0.0005,0,1,0.6,0.61);">48</div>
<div class="aln" style="left:1040px;top:547px;transform:matrix(1,0.0005,0,1,0.6,0.02);">49</div>
<div class="acl" style="left:1082px;top:547px;transform:matrix(1,0.0005,0,1,0.2,0.02);">                if <span class="p">(</span>lines !<span class="p">=</span> null<span class="p">)</span> <span class="p">{</span></div>
<div class="aln" style="left:1040px;top:559px;transform:matrix(1,0.0005,0,1,0.6,0.43);">50</div>
<div class="acl" style="left:1082px;top:559px;transform:matrix(1,0.0005,0,1,0.2,0.43);">                    Box <span class="p">{</span></div>
<div class="aln" style="left:1040px;top:571px;transform:matrix(1,0.0005,0,1,0.6,0.84);">51</div>
<div class="acl" style="left:1082px;top:571px;transform:matrix(1,0.0005,0,1,0.2,0.84);">                        Lines<span class="p">(</span>lines!!<span class="p">,</span> settings<span class="p">)</span></div>
<div class="aln" style="left:1040px;top:584px;transform:matrix(1,0.0005,0,1,0.6,0.25);">52</div>
<div class="acl" style="left:1082px;top:584px;transform:matrix(1,0.0005,0,1,0.2,0.25);">                        Box<span class="p">(</span></div>
<div class="aln" style="left:1040px;top:596px;transform:matrix(1,0.0005,0,1,0.6,0.66);">53</div>
<div class="acl" style="left:1082px;top:596px;transform:matrix(1,0.0005,0,1,0.2,0.66);">                            Modifier</div>
<div class="aln" style="left:1040px;top:609px;transform:matrix(1,0.0005,0,1,0.6,0.07);">54</div>
<div class="acl" style="left:1082px;top:609px;transform:matrix(1,0.0005,0,1,0.2,0.07);">                                .offset<span class="p">(</span></div>
<div class="aln" style="left:1040px;top:621px;transform:matrix(1,0.0005,0,1,0.6,0.48);">55</div>
<div class="acl" style="left:1082px;top:621px;transform:matrix(1,0.0005,0,1,0.2,0.48);">                                    x <span class="p">=</span> settings.fontSize.toDp<span class="p">()</span> * <span class="v">0</span>.<span class="v">5</span>f * settings.maxLineSymbols</div>
<div class="aln" style="left:1040px;top:633px;transform:matrix(1,0.0005,0,1,0.6,0.89);">56</div>
<div class="acl" style="left:1082px;top:633px;transform:matrix(1,0.0005,0,1,0.2,0.89);">                                <span class="p">)</span></div>
<div class="aln" style="left:1040px;top:646px;transform:matrix(1,0.0005,0,1,0.6,0.3);">57</div>
<div class="acl" style="left:1082px;top:646px;transform:matrix(1,0.0005,0,1,0.2,0.3);">                                .width<span class="p">(</span><span class="v">1</span>.dp<span class="p">)</span></div>
<div class="aln" style="left:1040px;top:658px;transform:matrix(1,0.0005,0,1,0.6,0.71);">58</div>
<div class="acl" style="left:1082px;top:658px;transform:matrix(1,0.0005,0,1,0.2,0.71);">                                .fillMaxHeight<span class="p">()</span></div>
<div class="aln" style="left:1040px;top:671px;transform:matrix(1,0.0005,0,1,0.6,0.12);">59</div>
<div class="acl" style="left:1082px;top:671px;transform:matrix(1,0.0005,0,1,0.2,0.12);">                                .background<span class="p">(</span>AppTheme.colors.backgroundLight<span class="p">)</span></div>
<div class="aln" style="left:1040px;top:683px;transform:matrix(1,0.0005,0,1,0.6,0.53);">60</div>
<div class="acl" style="left:1082px;top:683px;transform:matrix(1,0.0005,0,1,0.2,0.53);">                        <span class="p">)</span></div>
<div class="aln" style="left:1040px;top:695px;transform:matrix(1,0.0005,0,1,0.6,0.94);">61</div>
<div class="acl" style="left:1082px;top:695px;transform:matrix(1,0.0005,0,1,0.2,0.94);">                    <span class="p">}</span></div>
</div>
</div>
</body>
</html>
